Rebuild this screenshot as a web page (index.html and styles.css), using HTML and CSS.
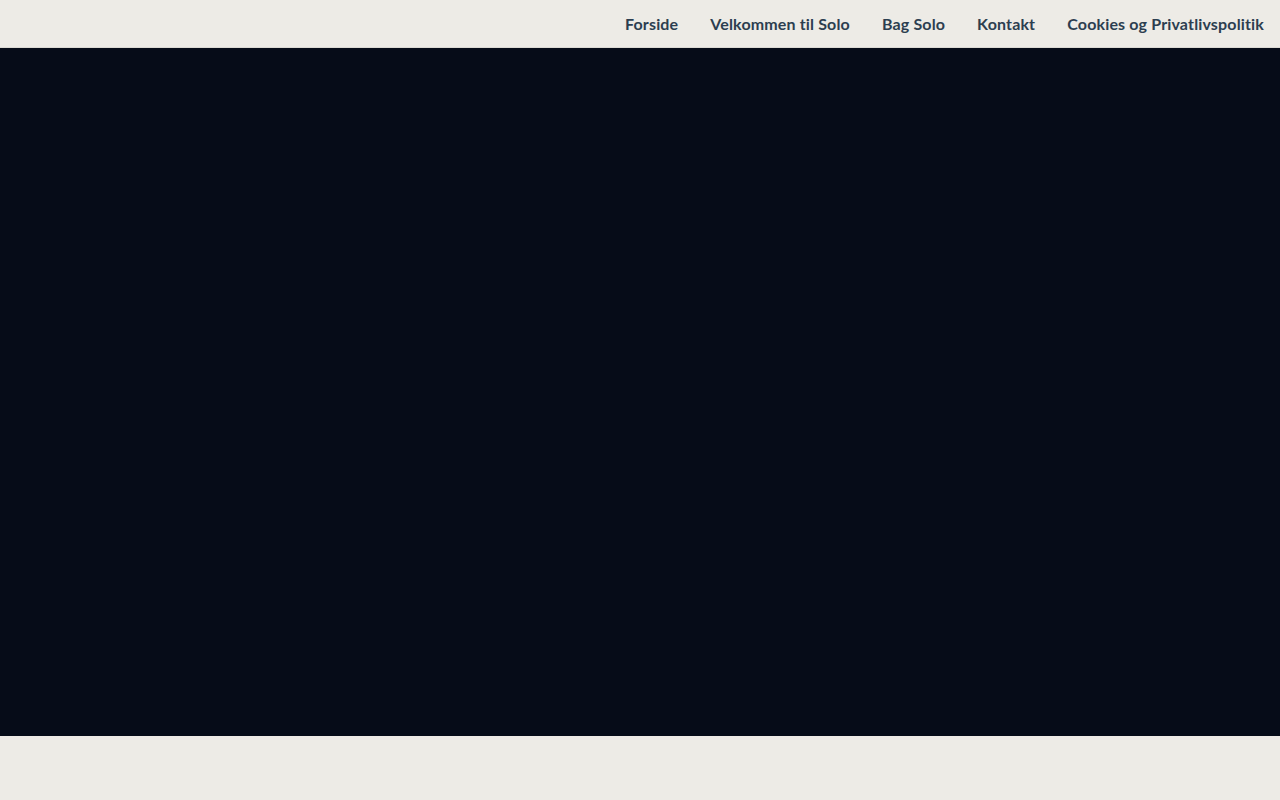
FILE: index.html
```html
<!DOCTYPE html>
<html lang="da">
<head>
<meta charset="utf-8">
<title>Solo</title>
<link rel="stylesheet" href="styles.css">
</head>
<body>
<header class="topbar">
  <nav class="nav">
    <a href="#">Forside</a>
    <a href="#">Velkommen til Solo</a>
    <a href="#">Bag Solo</a>
    <a href="#">Kontakt</a>
    <a href="#">Cookies og Privatlivspolitik</a>
  </nav>
</header>
<main class="hero"></main>
</body>
</html>
```
FILE: styles.css
```css
html, body {
  margin: 0;
  padding: 0;
  background: #edebe6;
  font-family: Lato, "Open Sans", sans-serif;
}
.topbar {
  height: 47px;
  border-bottom: 1px solid #dcdad4;
  display: flex;
  justify-content: flex-end;
  align-items: center;
  padding-right: 16px;
}
.nav {
  display: flex;
  gap: 32px;
}
.nav a {
  color: #2c3e50;
  font-weight: 700;
  font-size: 16px;
  text-decoration: none;
  letter-spacing: 0.15px;
}
.hero {
  height: 688px;
  background: #060c18;
}
```
